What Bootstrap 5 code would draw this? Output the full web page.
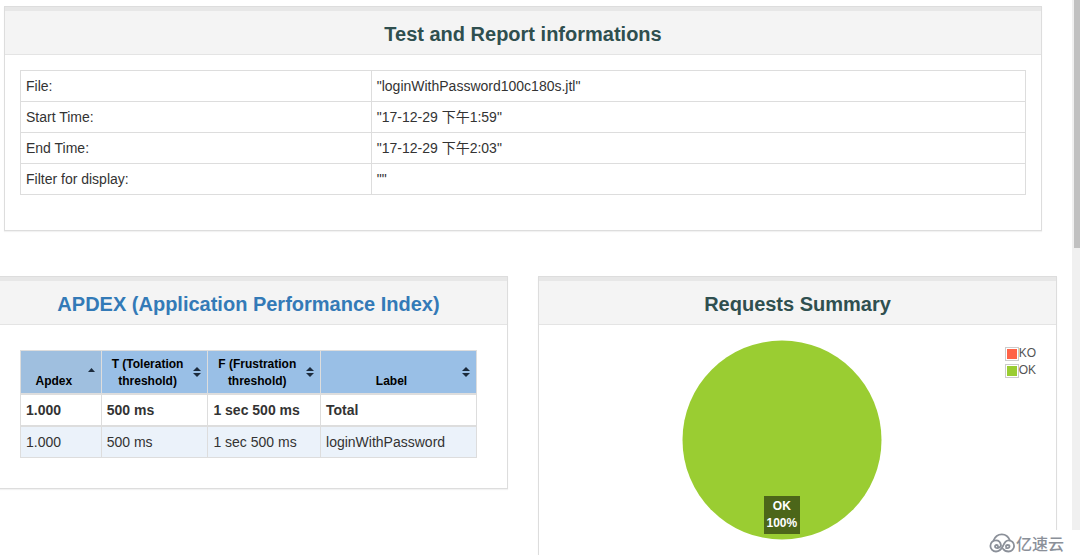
<!DOCTYPE html>
<html lang="en">
<head>
<meta charset="utf-8">
<meta name="viewport" content="width=device-width, initial-scale=1">
<title>Test report dashboard</title>
<link href="https://cdn.jsdelivr.net/npm/bootstrap@5.3.0/dist/css/bootstrap.min.css" rel="stylesheet">
<style>
  body { font-family: "Liberation Sans", "Noto Sans CJK SC", sans-serif; font-size: 14px; line-height: 20px; color: #333; }
  .page-main { min-width: 0; }
  .scroll-track { width: 8px; background: #f0f0f0; padding-left: 2px; }
  .scroll-thumb { height: 248px; background: #c1c1c1; }
  .panel { border: 1px solid #ddd; background: #fff; box-shadow: 0 1px 1px rgba(0,0,0,.05); }
  .panel-head { border-top: 4px solid #e7e7e7; border-bottom: 1px solid #e4e4e4; background: #f4f4f4; padding: 12px 15px 9px; }
  .panel-head h2 { font-size: 20px; line-height: 22px; font-weight: 700; color: #2f4f4f; margin: 0; text-align: center; }
  .panel-head a { color: #337ab7; text-decoration: none; }
  .panel-body { padding: 15px; }
  .info-panel { margin: 6px 30px 45px 4px; }
  .info-panel .panel-body { padding-bottom: 35px; }
  .stats-row { --bs-gutter-x: 30px; margin-left: -26px; margin-right: 0; }
  .report-table { table-layout: fixed; width: 100%; border-collapse: collapse; }
  .report-table td, .report-table th { border: 1px solid #ddd; padding: 5px; }
  .report-table td, .info-table th { color: #333; }
  .info-table th { font-weight: 400; }
  .apdex-wrap { padding: 25px 30px 30px; }
  .apdex-table thead th { position: relative; background: #99bfe6; color: #000; font-size: 12px; line-height: 17px; padding: 5px 19px 3px 5px; text-align: center; vertical-align: bottom; border-bottom: 2px solid #ddd; }
  .apdex-table thead th:first-child { background: #9fbfdf; }
  .apdex-table tbody + tbody { border-top: 2px solid #ddd; }
  .apdex-table .row-even td { background: #ebf2fa; }
  .sort-btn { position: absolute; right: 6px; top: 0; bottom: 0; border: 0; padding: 0; background: none; display: flex; align-items: center; }
  .chart-area { padding: 15px 20px 20px; min-height: 300px; }
  .pie { position: relative; width: 200px; height: 200px; }
  .pie-label { position: absolute; left: 50%; bottom: 6px; width: 36px; margin-left: -18px; background: #4c6619; color: #fff; font-size: 12px; line-height: 17px; font-weight: 700; padding: 2px 0; text-align: center; }
  .chart-legend { padding-top: 5px; }
  .legend-row { display: flex; align-items: center; font-size: 12px; line-height: 17px; color: #545454; }
  .swatch { width: 14px; height: 14px; border: 1px solid #ccc; padding: 1px; background-clip: content-box; }
  .swatch-ko { background-color: #ff6347; }
  .swatch-ok { background-color: #9acd32; }
  .brand-mark { position: fixed; right: 0; bottom: 0; height: 25px; padding: 0 16px 0 4px; background: #fff; color: #8b9099; font: 500 16px/24px "Noto Sans CJK SC", sans-serif; }
</style>
</head>
<body class="vh-100 overflow-hidden d-flex bg-white">
<main class="page-main flex-grow-1 overflow-hidden">
  <section class="panel info-panel">
    <div class="panel-head"><h2>Test and Report informations</h2></div>
    <div class="panel-body">
      <table class="report-table info-table">
        <colgroup><col style="width:34.9%"><col></colgroup>
        <tbody>
          <tr><th scope="row">File:</th><td>"loginWithPassword100c180s.jtl"</td></tr>
          <tr><th scope="row">Start Time:</th><td>"17-12-29 下午1:59"</td></tr>
          <tr><th scope="row">End Time:</th><td>"17-12-29 下午2:03"</td></tr>
          <tr><th scope="row">Filter for display:</th><td>""</td></tr>
        </tbody>
      </table>
    </div>
  </section>
  <div class="row stats-row align-items-start">
    <div class="col-6">
      <section class="panel">
        <div class="panel-head"><h2><a href="#apdex">APDEX (Application Performance Index)</a></h2></div>
        <div class="apdex-wrap" id="apdex">
          <table class="report-table apdex-table">
            <colgroup><col style="width:17.7%"><col style="width:23.4%"><col style="width:24.7%"><col></colgroup>
            <thead>
              <tr>
                <th scope="col">Apdex<button class="sort-btn" type="button" aria-label="Sort by Apdex"><svg width="7" height="10" viewBox="0 0 7 10"><path d="M0 5 3.5 1 7 5z" fill="#1c2b3c"/></svg></button></th>
                <th scope="col">T (Toleration threshold)<button class="sort-btn" type="button" aria-label="Sort by toleration"><svg width="8" height="10" viewBox="0 0 8 10"><path d="M0 4 4 0 8 4zM0 6H8L4 10z" fill="#1c2b3c"/></svg></button></th>
                <th scope="col">F (Frustration threshold)<button class="sort-btn" type="button" aria-label="Sort by frustration"><svg width="8" height="10" viewBox="0 0 8 10"><path d="M0 4 4 0 8 4zM0 6H8L4 10z" fill="#1c2b3c"/></svg></button></th>
                <th scope="col">Label<button class="sort-btn" type="button" aria-label="Sort by label"><svg width="8" height="10" viewBox="0 0 8 10"><path d="M0 4 4 0 8 4zM0 6H8L4 10z" fill="#1c2b3c"/></svg></button></th>
              </tr>
            </thead>
            <tbody class="fw-bold"><tr><td>1.000</td><td>500 ms</td><td>1 sec 500 ms</td><td>Total</td></tr></tbody>
            <tbody><tr class="row-even"><td>1.000</td><td>500 ms</td><td>1 sec 500 ms</td><td>loginWithPassword</td></tr></tbody>
          </table>
        </div>
      </section>
    </div>
    <div class="col-6">
      <section class="panel">
        <div class="panel-head"><h2>Requests Summary</h2></div>
        <div class="chart-area d-flex align-items-start">
          <div class="flex-grow-1 d-flex justify-content-center">
            <div class="pie">
              <svg class="d-block" width="200" height="200" viewBox="0 0 200 200" role="img" aria-label="All requests OK"><circle cx="100" cy="100" r="99.5" fill="#9acd32"/></svg>
              <div class="pie-label">OK<br>100%</div>
            </div>
          </div>
          <div class="chart-legend">
            <div class="legend-row"><span class="swatch swatch-ko"></span>KO</div>
            <div class="legend-row"><span class="swatch swatch-ok"></span>OK</div>
          </div>
        </div>
      </section>
    </div>
  </div>
</main>
<div class="scroll-track flex-shrink-0" aria-hidden="true"><div class="scroll-thumb"></div></div>
<div class="brand-mark d-flex align-items-center">
  <svg width="27" height="20" viewBox="0 0 27 20" fill="none" stroke="#8b9099" stroke-width="1.800" stroke-linecap="round"><path d="M4.500 7.500C6 3.500 9 1.300 12.800 1.300S19.500 3.500 21 7.500"/><path d="M9 13.500C9 11.500 6 11.500 6 13.500C6 16 11 15.500 12 12.500C11.500 9 9.500 7.300 7 7.300A5.600 5.600 0 0 0 7 18.500C11 18.500 12.500 16 14 13C15 10.500 16.500 7.300 19.500 7.300A5.600 5.600 0 0 1 19.500 18.500C17 18.500 15.200 17.500 14.200 16M17 13.500C17 11.500 20.500 11.500 20.500 13.500C20.500 15 18.500 15.500 17 15"/></svg>
  <span>亿速云</span>
</div>
<script src="https://cdn.jsdelivr.net/npm/bootstrap@5.3.0/dist/js/bootstrap.bundle.min.js"></script>
</body>
</html>
